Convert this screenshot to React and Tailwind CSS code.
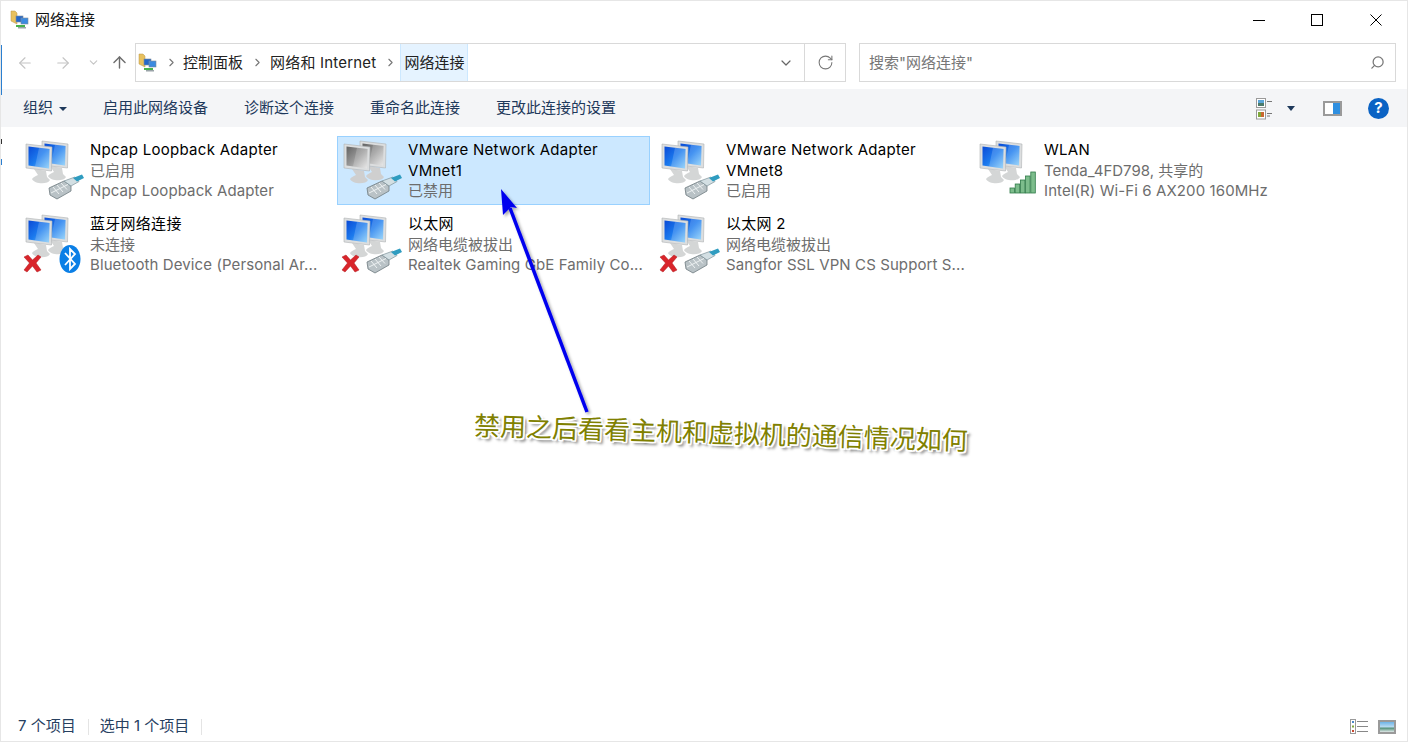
import { ArrowLeft, ArrowRight, ArrowUp, ChevronDown, ChevronRight, RotateCw, Search } from 'lucide-react';

const items = [
  { name: 'Npcap Loopback Adapter', status: '已启用', device: 'Npcap Loopback Adapter', badge: 'cable' },
  { name: 'VMware Network Adapter', name2: 'VMnet1', status: '已禁用', selected: true, gray: true, badge: 'cable' },
  { name: 'VMware Network Adapter', name2: 'VMnet8', status: '已启用', badge: 'cable' },
  { name: 'WLAN', status: 'Tenda_4FD798, 共享的', device: 'Intel(R) Wi-Fi 6 AX200 160MHz', badge: 'signal' },
  { name: '蓝牙网络连接', status: '未连接', device: 'Bluetooth Device (Personal Ar...', badge: 'bluetooth', error: true },
  { name: '以太网', status: '网络电缆被拔出', device: 'Realtek Gaming GbE Family Co...', badge: 'cable', error: true },
  { name: '以太网 2', status: '网络电缆被拔出', device: 'Sangfor SSL VPN CS Support S...', badge: 'cable', error: true },
];

function Monitor({ x, y, gray, id }) {
  return (
    <g transform={`translate(${x} ${y})`}>
      <path d="M8 25 L20 27 L21 33 L24 36 C22 41 8 40 6 35 C7 33 10 32 12 31 Z" fill={gray ? '#cfcfcf' : '#d4d6d6'} />
      <path d="M0 0 L26 3 L25.5 27 L0 24 Z" fill="#dcdedf" stroke="#aeb2b4" strokeWidth="0.6" />
      <path d="M2.5 2.5 L23.5 5 L23 24.5 L2.5 21.5 Z" fill={`url(#${id})`} />
      <path d="M13 3.8 L23.5 5 L23 24.5 L9 22.5 Z" fill="#fff" opacity="0.18" />
    </g>
  );
}

function NetIcon({ gray, badge, error }) {
  const id = gray ? 'screen-gray' : 'screen-blue';
  return (
    <svg width="64" height="64" viewBox="0 0 64 64" className="shrink-0">
      <defs>
        <linearGradient id="screen-blue" x1="0" y1="0" x2="1" y2="1">
          <stop offset="0" stopColor="#0a4ad6" />
          <stop offset="0.5" stopColor="#1c7bee" />
          <stop offset="1" stopColor="#86cdf9" />
        </linearGradient>
        <linearGradient id="screen-gray" x1="0" y1="0" x2="1" y2="1">
          <stop offset="0" stopColor="#626262" />
          <stop offset="0.5" stopColor="#9a9a9a" />
          <stop offset="1" stopColor="#e4e4e4" />
        </linearGradient>
      </defs>
      <Monitor x={21} y={4} gray={gray} id={id} />
      <Monitor x={5} y={7} gray={gray} id={id} />
      {badge === 'cable' && (
        <g>
          <path d="M28 51 L43 44 L50 49 L50 54 L36 62 L29 58 Z" fill="#b9c2c6" stroke="#6f7b80" strokeWidth="0.8" />
          <path d="M32 50 L38 57 M36 48 L42 55 M40 46 L46 52.5 M30 56 L47 47.5" stroke="#eef2f3" strokeWidth="1" />
          <path d="M43 44 L54 40 L58 44.5 L50 49 Z" fill="#d3dfe3" stroke="#7d9098" strokeWidth="0.7" />
          <path d="M52 41 L61 37.5 L63 41 L56 44.5 Z" fill="#2f9cc0" />
        </g>
      )}
      {badge === 'signal' && (
        <g fill="#7dbd8c" stroke="#2f7a48" strokeWidth="0.8">
          <rect x="35" y="51" width="4.5" height="5" />
          <rect x="40.2" y="47" width="4.5" height="9" />
          <rect x="45.4" y="43" width="4.5" height="13" />
          <rect x="50.6" y="39" width="4.5" height="17" />
          <rect x="55.8" y="35" width="4.5" height="21" />
        </g>
      )}
      {badge === 'bluetooth' && (
        <g>
          <ellipse cx="49" cy="48" rx="10.5" ry="14" fill="#0b7fe6" />
          <path d="M44 42 L54 53 L49 58 L49 38 L54 43 L44 54" fill="none" stroke="#fff" strokeWidth="1.8" />
        </g>
      )}
      {error && (
        <path d="M3 46 L7 44 L11.5 49 L17 44 L20 46 L15 52 L20 59 L16 61 L11.5 55 L6 61 L3 59 L8.5 52 Z" fill="#d9252b" stroke="#b01a1f" strokeWidth="0.5" />
      )}
    </svg>
  );
}

function FolderNetIcon() {
  return (
    <svg width="20" height="20" viewBox="0 0 20 20" className="shrink-0">
      <path d="M1 1 L5 1 L7 3 L7 14 L1 11 Z" fill="#e8c15f" stroke="#b8964a" strokeWidth="0.5" />
      <rect x="6" y="6" width="7" height="6" fill="#2467c9" stroke="#7f8c99" strokeWidth="0.6" />
      <rect x="11" y="8" width="7" height="6" fill="#3c8be0" stroke="#7f8c99" strokeWidth="0.6" />
      <rect x="6" y="15" width="9" height="2" fill="#48b14c" />
      <rect x="8" y="17" width="8" height="1.5" fill="#9aa3a8" />
    </svg>
  );
}

function ViewsIcon() {
  return (
    <svg width="20" height="22" viewBox="0 0 20 22">
      <rect x="0.5" y="0.5" width="9" height="9" fill="#fff" stroke="#9a9a9a" />
      <rect x="2" y="2" width="6" height="3" fill="#5aa5d8" />
      <rect x="2" y="5" width="6" height="3" fill="#4b7a6a" />
      <rect x="0.5" y="12" width="9" height="9" fill="#fff" stroke="#9a9a9a" />
      <rect x="2" y="14" width="3" height="5" fill="#7fa83a" />
      <rect x="5" y="14" width="3" height="5" fill="#c9672f" />
      <path d="M11 3.5 H16 M11 15.5 H16 M11 18 H14" stroke="#777" strokeWidth="1" />
    </svg>
  );
}

function Item({ item }) {
  return (
    <div className={`h-[69px] w-[313px] flex items-start pl-[1px] border ${item.selected ? 'bg-[#cce8ff] border-[#99d1ff]' : 'border-transparent'}`}>
      <NetIcon gray={item.gray} badge={item.badge} error={item.error} />
      <div className="ml-[5px] mt-[3px] flex flex-col text-[15px] leading-[20.5px] whitespace-nowrap">
        <span className="text-black tracking-[0.28px]">{item.name}</span>
        {item.name2 && <span className="text-black tracking-[0.28px]">{item.name2}</span>}
        <span className="text-[#6d6d6d]">{item.status}</span>
        {item.device && <span className="text-[#6d6d6d] tracking-[0.1px]">{item.device}</span>}
      </div>
    </div>
  );
}

export default function App() {
  return (
    <div className="relative w-[1408px] h-[742px] overflow-hidden bg-white flex flex-col border border-[#e6e6e6] font-['Inter','Noto_Sans_CJK_SC',sans-serif] text-[15px]">
      {/* Title bar */}
      <div className="h-[41px] flex items-center shrink-0 pl-[9px] pb-[3px]">
        <FolderNetIcon />
        <span className="ml-[5px] text-[#111]">网络连接</span>
        <div className="ml-auto flex items-center mr-[1px]">
          <div className="w-[58px] flex justify-center"><div className="w-[12px] h-px bg-black" /></div>
          <div className="w-[58px] flex justify-center"><div className="w-[12px] h-[12px] border border-black" /></div>
          <div className="w-[60px] flex justify-center">
            <svg width="12" height="12" viewBox="0 0 12 12">
              <path d="M0.5 0.5 L11.5 11.5 M11.5 0.5 L0.5 11.5" stroke="#000" strokeWidth="1" />
            </svg>
          </div>
        </div>
      </div>

      {/* Address row */}
      <div className="h-[39px] flex items-stretch shrink-0 mt-[1px]">
        <div className="w-[134px] flex items-center shrink-0 text-[#c4c4c4]">
          <ArrowLeft size={18} strokeWidth={1.5} className="ml-[15px]" />
          <ArrowRight size={18} strokeWidth={1.5} className="ml-[20px]" />
          <ChevronDown size={13} strokeWidth={2} className="ml-[15px]" />
          <ArrowUp size={19} strokeWidth={1.8} className="ml-[10px] text-[#6d6d6d]" />
        </div>
        <div className="w-[711px] flex items-stretch border border-[#d9d9d9] shrink-0">
          <div className="flex items-center pl-[2px] flex-1">
            <FolderNetIcon />
            <ChevronRight size={13} strokeWidth={2} className="ml-[7px] text-[#777]" />
            <span className="ml-[5px] pt-[1px] text-[#222]">控制面板</span>
            <ChevronRight size={13} strokeWidth={2} className="ml-[8px] text-[#777]" />
            <span className="ml-[6px] pt-[1px] text-[#222] tracking-[0.2px]">网络和 Internet</span>
            <ChevronRight size={13} strokeWidth={2} className="ml-[8px] text-[#777]" />
            <span className="ml-[3px] h-full flex items-center pt-[1px] px-[3px] bg-[#e5f3ff] border-x border-[#cce8ff] text-[#222]">网络连接</span>
            <ChevronDown size={16} strokeWidth={1.8} className="ml-auto mr-[10px] text-[#666]" />
          </div>
          <div className="w-[41px] flex items-center justify-center border-l border-[#d9d9d9]">
            <RotateCw size={17} strokeWidth={1.5} className="text-[#777]" />
          </div>
        </div>
        <div className="w-[537px] ml-[13px] flex items-center border border-[#d9d9d9] pl-[9px] pr-[10px] shrink-0">
          <span className="text-[#777] pt-[1px]">搜索"网络连接"</span>
          <Search size={15} strokeWidth={2} className="ml-auto -scale-x-100 text-[#777]" />
        </div>
      </div>

      {/* Toolbar */}
      <div className="h-[38px] mt-[7px] pt-[1px] bg-[#f4f5f7] flex items-center shrink-0 text-[#1e395b]">
        <span className="ml-[22px]">组织</span>
        <span className="ml-[6px] w-0 h-0 border-x-[4px] border-x-transparent border-t-[4px] border-t-[#1e395b]" />
        <span className="ml-[36px]">启用此网络设备</span>
        <span className="ml-[36px]">诊断这个连接</span>
        <span className="ml-[36px]">重命名此连接</span>
        <span className="ml-[36px]">更改此连接的设置</span>
        <div className="ml-auto flex items-center">
          <ViewsIcon />
          <span className="ml-[11px] w-0 h-0 border-x-[4px] border-x-transparent border-t-[5px] border-t-[#1e395b]" />
          <div className="ml-[28px] w-[19px] h-[15px] flex border-2 border-[#9a9a9a] bg-white">
            <div className="ml-auto w-[7px] bg-[#2f8fe0]" />
          </div>
          <div className="ml-[26px] mr-[18px] w-[21px] h-[21px] rounded-full bg-[#0b63c4] flex items-center justify-center text-white font-bold text-[15px]">?</div>
        </div>
      </div>

      {/* Connections */}
      <div className="flex-1 pl-[18px] pt-[9px] grid grid-cols-[repeat(4,313px)] gap-x-[5px] gap-y-[5px] content-start">
        {items.map((item) => (
          <Item key={item.name + (item.name2 || '')} item={item} />
        ))}
      </div>

      {/* Status bar */}
      <div className="h-[26px] flex items-center shrink-0 text-[#27405f] pb-[3px]">
        <span className="ml-[17px]">7 个项目</span>
        <span className="ml-[12px] h-[16px] border-l border-[#e4e4e4]" />
        <span className="ml-[11px]">选中 1 个项目</span>
        <span className="ml-[12px] h-[16px] border-l border-[#e4e4e4]" />
        <div className="ml-auto flex items-center mr-[11px]">
          <svg width="19" height="15" viewBox="0 0 19 15">
            <rect x="0.5" y="0.5" width="5" height="14" fill="#fff" stroke="#9a9a9a" />
            <rect x="2" y="2" width="2" height="2" fill="#4b89c9" />
            <rect x="2" y="6.5" width="2" height="2" fill="#7fa83a" />
            <rect x="2" y="11" width="2" height="2" fill="#c9472f" />
            <path d="M7 2.5 H18 M7 7.5 H18 M7 12.5 H18" stroke="#888" strokeWidth="1" />
          </svg>
          <div className="ml-[9px] w-[18px] h-[14px] border-2 border-[#9a9a9a] bg-[linear-gradient(180deg,#6db4e8_0%,#bcdcf0_50%,#4f8f78_60%,#e0e8e8_100%)]" />
        </div>
      </div>

      {/* Bits of the window behind, along the left edge */}
      <div className="absolute left-[-1px] top-[44px] w-[2px] h-[50px] bg-[#2b7fd0]" />
      <div className="absolute left-[-1px] top-[138px] w-[2px] h-[5px] bg-[#333]" />
      <div className="absolute left-[-1px] top-[158px] w-[2px] h-[6px] bg-[#2b7fd0]" />

      {/* Annotation arrow */}
      <svg className="absolute left-[-1px] top-[-1px] pointer-events-none" width="1408" height="742" viewBox="0 0 1408 742">
        <defs>
          <filter id="arrow-shadow" x="-30%" y="-10%" width="160%" height="120%">
            <feDropShadow dx="2" dy="2" stdDeviation="1.5" floodColor="#000" floodOpacity="0.35" />
          </filter>
        </defs>
        <g filter="url(#arrow-shadow)">
          <path d="M587 412 L510 208" stroke="#0000ee" strokeWidth="3.5" fill="none" />
          <path d="M501 189 L517 208 L511 207 L503 215 Z" fill="#0000ee" />
        </g>
      </svg>

      {/* Annotation text */}
      <div className="absolute left-[473px] top-[411px] origin-left rotate-[1.75deg] whitespace-nowrap text-[26px] leading-[30px] text-[#808000] font-['Liberation_Serif','Noto_Sans_CJK_SC',serif] [text-shadow:-1.5px_0_0_#fff,1.5px_0_0_#fff,0_-1.5px_0_#fff,0_1.5px_0_#fff,-1.5px_-1.5px_0_#fff,1.5px_1.5px_0_#fff,-1.5px_1.5px_0_#fff,1.5px_-1.5px_0_#fff,3px_3px_3px_rgba(0,0,0,0.6)]">
        禁用之后看看主机和虚拟机的通信情况如何
      </div>
    </div>
  );
}
